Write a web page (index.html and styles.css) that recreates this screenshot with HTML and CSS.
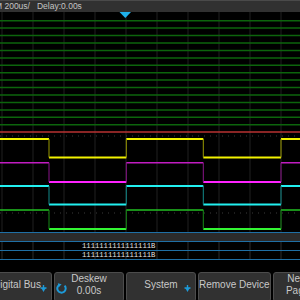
FILE: index.html
```html
<!DOCTYPE html>
<html lang="en">
<head>
  <meta charset="UTF-8">
  <title>Scope</title>
  <link rel="stylesheet" href="styles.css">
</head>
<body>
  <!-- Timebase bar -->
  <header class="status-bar">
    <span class="timebase">M 200us/</span>
    <span class="delay">Delay:0.00s</span>
  </header>

  <!-- Waveform area -->
  <svg class="screen" width="300" height="220" viewBox="0 0 300 220">
    <g stroke="#161616" stroke-width="1.5">
      <path d="M2 0V220M33 0V220M64 0V220M95 0V220M126 0V220M157 0V220M188 0V220M219 0V220M250 0V220M281 0V220"/>
    </g>
    <g stroke="#0c640c" stroke-width="1.5">
      <path d="M0 8.7H300M0 16.1H300M0 23.6H300M0 31H300M0 38.4H300M0 45.9H300M0 53.3H300M0 60.7H300M0 68.1H300M0 75.6H300M0 83H300M0 90.4H300M0 97.9H300M0 105.3H300M0 112.7H300"/>
    </g>
    <path d="M0 120H300" stroke="#b83232" stroke-width="1.4"/>
    <g stroke="#3a3a3a" stroke-width="1" stroke-dasharray="1 5">
      <path d="M0 124H300M0 201H300"/>
    </g>
    <polygon points="119.5,0 131,0 125.3,6" fill="#1fb0ea"/>

    <!-- channel 1 -->
    <path d="M0 127H49M49 145.5H126.3M126.3 127H203.3M203.3 145.5H281M281 127H300" stroke="#f2f200" stroke-width="2"/>
    <path d="M49 127V145.5M126.3 127V145.5M203.3 127V145.5M281 127V145.5" stroke="#9a9a00" stroke-width="1"/>
    <!-- channel 2 -->
    <path d="M0 150.7H49M126.3 150.7H203.3M281 150.7H300" stroke="#c21cc2" stroke-width="1.5"/>
    <path d="M49 170H126.3M203.3 170H281" stroke="#ff22ff" stroke-width="2"/>
    <path d="M49 150.7V170M126.3 150.7V170M203.3 150.7V170M281 150.7V170" stroke="#8a158a" stroke-width="1"/>
    <!-- channel 3 -->
    <path d="M0 174H49M49 192.5H126.3M126.3 174H203.3M203.3 192.5H281M281 174H300" stroke="#22f0f0" stroke-width="2"/>
    <path d="M49 174V192.5M126.3 174V192.5M203.3 174V192.5M281 174V192.5" stroke="#128a8a" stroke-width="1"/>
    <!-- channel 4 -->
    <path d="M0 198H49M126.3 198H203.3M281 198H300" stroke="#22c022" stroke-width="1.5"/>
    <path d="M49 217H126.3M203.3 217H281" stroke="#33f533" stroke-width="2"/>
    <path d="M49 198V217M126.3 198V217M203.3 198V217M281 198V217" stroke="#178a17" stroke-width="1"/>
  </svg>

  <!-- Decoded bus -->
  <div class="bus">
    <div class="bus-head"></div>
    <div class="bus-row">1111111111111111B</div>
    <div class="bus-row">1111111111111111B</div>
  </div>

  <!-- Soft keys -->
  <div class="softkeys">
    <div class="softkey">
      <span>Digital Bus</span>
      <svg class="sub-icon" width="7" height="7" viewBox="0 0 7 7"><path d="M3.5 0V3M0.5 3H6.5" stroke="#1d9ad8" stroke-width="1.4"/><path d="M1.2 3H5.8L3.5 7Z" fill="#1d9ad8"/></svg>
    </div>
    <div class="softkey">
      <svg class="knob-icon" width="11" height="11" viewBox="0 0 11 11"><path d="M8.6 2.6A4.2 4.2 0 1 1 3.4 1.8" fill="none" stroke="#1d9ad8" stroke-width="2"/><path d="M1.8 0.2L5.6 1.2L2.8 4.2Z" fill="#1d9ad8"/></svg>
      <span>Deskew</span>
      <span>0.00s</span>
    </div>
    <div class="softkey">
      <span>System</span>
      <svg class="sub-icon" width="7" height="7" viewBox="0 0 7 7"><path d="M3.5 0V3M0.5 3H6.5" stroke="#1d9ad8" stroke-width="1.4"/><path d="M1.2 3H5.8L3.5 7Z" fill="#1d9ad8"/></svg>
    </div>
    <div class="softkey">
      <span>Remove Device</span>
    </div>
    <div class="softkey softkey-last">
      <span>Next</span>
      <span>Page</span>
    </div>
  </div>
</body>
</html>
```

FILE: styles.css
```css
/* Reset */
* {
  box-sizing: border-box;
  margin: 0;
  padding: 0;
}

body {
  width: 300px;
  height: 300px;
  overflow: hidden;
  background-color: #000;
  font-family: "Liberation Sans", Arial, sans-serif;
  color: #c8c8c8;
}

/* Top status bar */
.status-bar {
  height: 12px;
  background-color: #313131;
  border-top: 1px solid #4a4a4a;
  display: flex;
  font-size: 8.5px;
  line-height: 11px;
  white-space: nowrap;
  color: #c4c4c4;
}

.timebase {
  margin-left: -5px;
}

.delay {
  margin-left: 7px;
}

.screen {
  display: block;
}

/* Decoded bus rows */
.bus {
  border-top: 1px solid #1f6fa5;
  background-image: repeating-linear-gradient(90deg, transparent 0, transparent 1px, #161616 1px, #161616 2.5px, transparent 2.5px, transparent 31px);
}

.bus-head {
  height: 9px;
  background-color: #2b2b2b;
  border-bottom: 1px solid #1f6fa5;
}

.bus-row {
  height: 9px;
  border-bottom: 1px solid #1f6fa5;
  padding-left: 82px;
  font-family: "Liberation Mono", "Courier New", monospace;
  font-size: 7.2px;
  line-height: 8px;
  color: #e4e4e4;
}

/* Soft keys */
.softkeys {
  display: flex;
  gap: 2px;
  margin-top: 12px;
  margin-left: -18px;
}

.softkey {
  position: relative;
  flex: 0 0 70px;
  height: 30px;
  padding-bottom: 4px;
  background-color: #313131;
  border: 1px solid #4c4c4c;
  border-radius: 3px;
  display: flex;
  flex-direction: column;
  justify-content: center;
  align-items: center;
  font-size: 10px;
  line-height: 12px;
  white-space: nowrap;
}

.softkey-last {
  padding-right: 20px;
}

.sub-icon {
  position: absolute;
  right: 4px;
  top: 12px;
}

.knob-icon {
  position: absolute;
  left: 1px;
  top: 10px;
}
```
